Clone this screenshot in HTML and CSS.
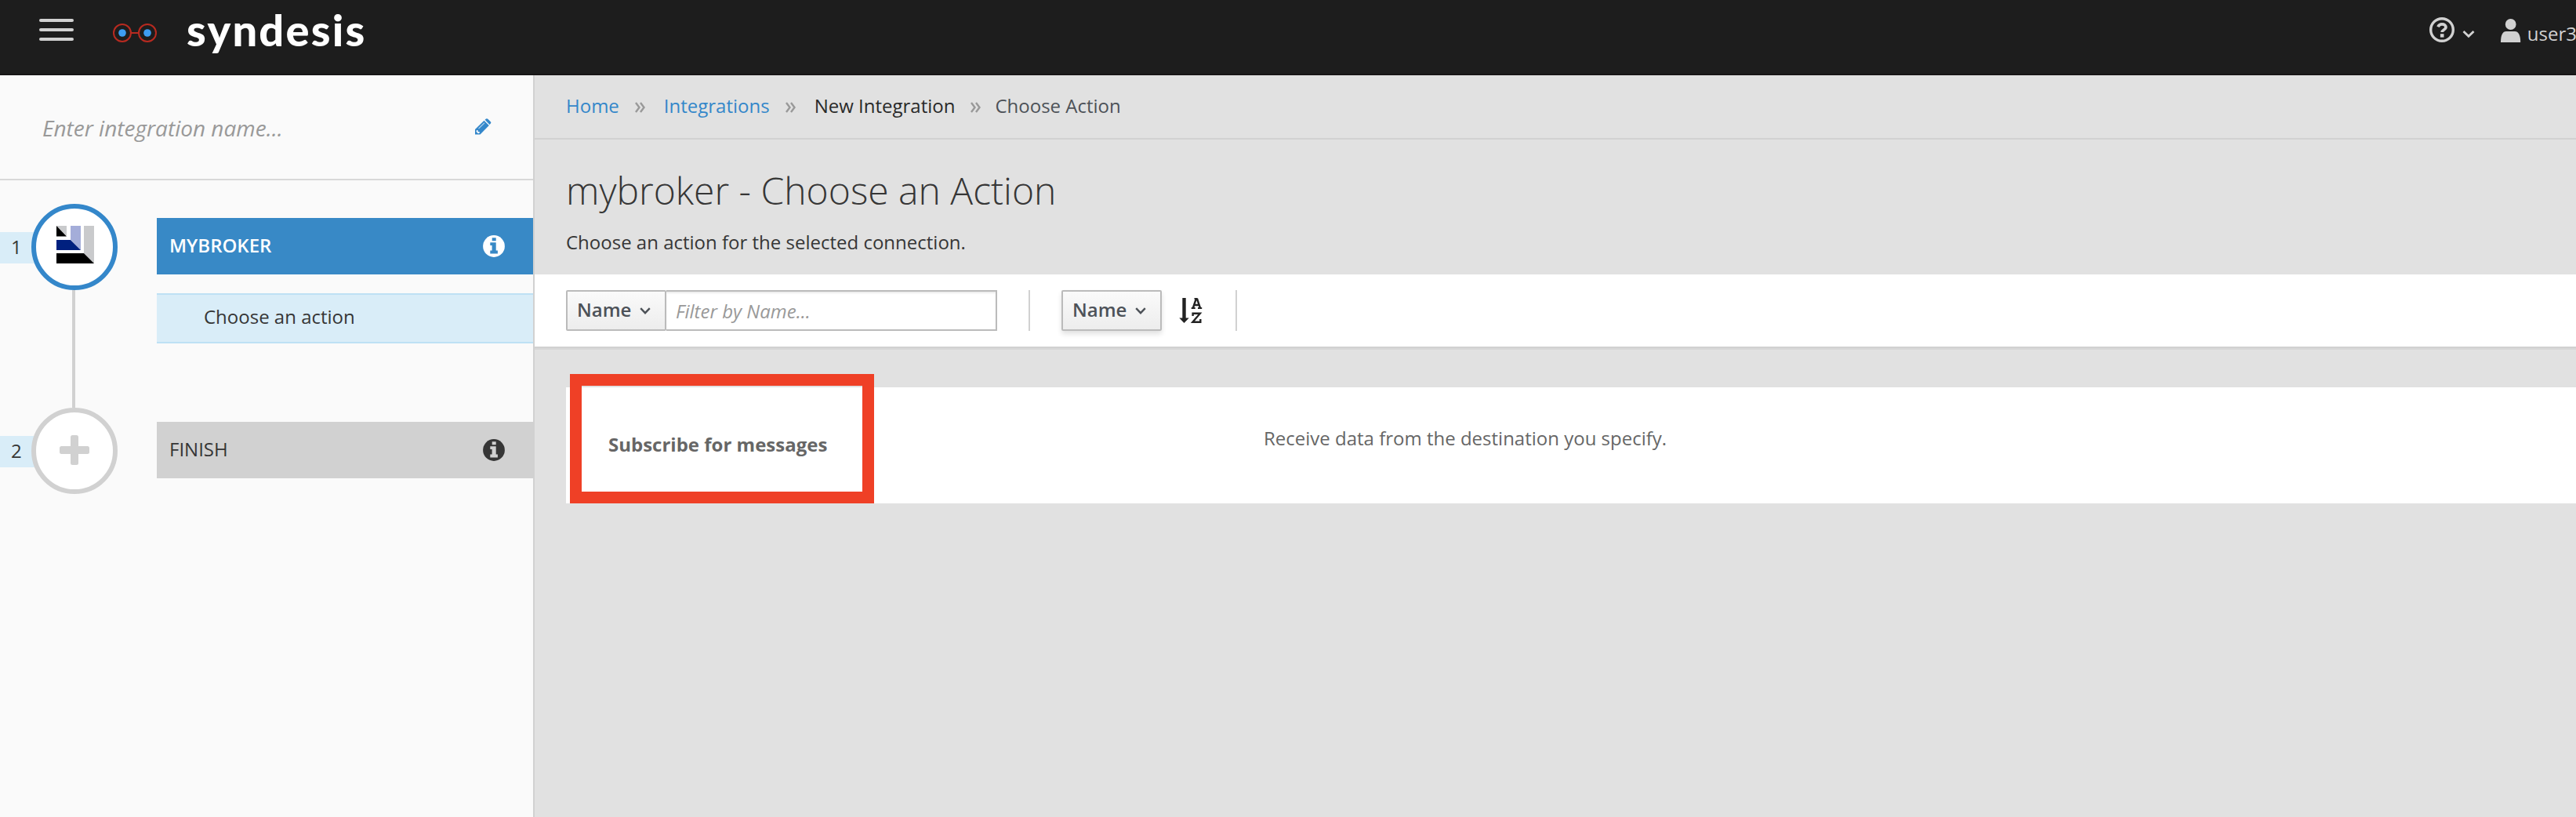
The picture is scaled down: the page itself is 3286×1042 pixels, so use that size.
FILE: index.html
```html
<!DOCTYPE html>
<html lang="en">
<head>
<meta charset="utf-8">
<title>Syndesis</title>
<link rel="stylesheet" href="styles.css">
</head>
<body>
<header class="navbar">
  <button class="menu" aria-label="Menu"><span></span><span></span><span></span></button>
  <svg class="logo" width="56" height="24" viewBox="0 0 56 24" fill="none" stroke="#b82a20" stroke-width="2">
    <circle cx="12" cy="12" r="11"/><circle cx="44" cy="12" r="11"/><path d="M23 12h10"/>
    <circle cx="12" cy="12" r="4.8" fill="#3d9df2" stroke="none"/><circle cx="44" cy="12" r="4.8" fill="#3d9df2" stroke="none"/>
  </svg>
  <span class="wordmark">syndesis</span>
  <nav class="utility">
    <svg class="help" width="34" height="34" viewBox="0 0 34 34" fill="none" stroke="#d1d1d1">
      <circle cx="17" cy="17" r="14.3" stroke-width="3.4"/>
      <path d="M12 13.2q1.4-3.4 5-3.4c3 0 5 1.6 5 3.9 0 3.4-4.8 3.2-4.8 6.3" stroke-width="3.8"/>
      <path d="M17.2 22.2v4.400" stroke-width="4.6"/>
    </svg>
    <svg class="caret" width="16" height="11" viewBox="0 0 16 11" fill="none" stroke="#d1d1d1" stroke-width="2.8"><path d="M1.5 2l6.500 6.300L14.500 2"/></svg>
    <svg class="person" width="26" height="30" viewBox="0 0 26 30" fill="#d1d1d1"><circle cx="12.700" cy="7" r="6.900"/><path d="M0 30c0-9.500 2.500-14 7-14h11c4.500 0 7.200 4.500 7.200 14z"/></svg>
    <span class="user">user3</span>
  </nav>
</header>
<div class="layout">
  <aside class="sidebar">
    <div class="name-row">
      <span class="name-placeholder">Enter integration name...</span>
      <svg class="pencil" width="22" height="22" viewBox="0 0 22 22" fill="#3487ca"><path d="M1 14L12.500 2.800l6.300 6.200L7.500 20.500H1z"/><path d="M13.600 1.800L15 .5q1.200-.8 2.300.2l3.500 3.500q1 1.200 0 2.400l-1.200 1.300z"/><path d="M5.500 13L13 5.700" stroke="#a9cdea" stroke-width="1.200"/><path d="M2.800 15.200l1.800-.2v2h2.200l-.3 1.700-1.500.6-2.400-2.400z" fill="#fff"/></svg>
    </div>
    <div class="flow">
      <section class="step">
        <div class="step-mark">
          <span class="step-number">1</span>
          <div class="node node-active">
            <svg width="48" height="48" viewBox="0 0 48 48">
              <path d="M0 0h13v13z" fill="#c9cacc"/><path d="M0 0l13 13.500H0z" fill="#000"/>
              <path d="M18 0h13v31L18 17.500z" fill="#a4add9"/><path d="M0 18h18l13 13H0z" fill="#00207f"/>
              <path d="M35 0h13v48L35 34.500z" fill="#c9cacc"/><path d="M0 35h35l13 13H0z" fill="#000"/>
            </svg>
          </div>
          <span class="connector"></span>
        </div>
        <div class="step-body">
          <div class="step-title step-title-active"><span>MYBROKER</span>
            <svg class="info" width="28" height="28" viewBox="0 0 28 28"><circle cx="14" cy="14" r="13.900"/><path class="cut" d="M11.700 3.300h5v4h-5zM9.300 9.300h7.400v10.300h2.200v3.800H9.300v-3.800h2.300v-6.500H9.300z"/></svg>
          </div>
          <div class="substep">Choose an action</div>
        </div>
      </section>
      <section class="step">
        <div class="step-mark">
          <span class="step-number">2</span>
          <div class="node"><svg width="38" height="38" viewBox="0 0 38 38" fill="#d1d1d1"><rect x="14" width="10" height="38" rx="2.500"/><rect y="14" width="38" height="10" rx="2.500"/></svg></div>
        </div>
        <div class="step-body">
          <div class="step-title"><span>FINISH</span>
            <svg class="info" width="28" height="28" viewBox="0 0 28 28"><circle cx="14" cy="14" r="13.900"/><path class="cut" d="M11.700 3.300h5v4h-5zM9.300 9.300h7.400v10.300h2.200v3.800H9.300v-3.800h2.300v-6.500H9.300z"/></svg>
          </div>
        </div>
      </section>
    </div>
  </aside>
  <main class="content">
    <nav class="breadcrumb">
      <a class="crumb-home">Home</a><svg class="sep" width="13" height="14" viewBox="0 0 13 14"><path d="M1 1l4.500 6L1 13M7 1l4.500 6L7 13"/></svg>
      <a class="crumb-list">Integrations</a><svg class="sep" width="13" height="14" viewBox="0 0 13 14"><path d="M1 1l4.500 6L1 13M7 1l4.500 6L7 13"/></svg>
      <span class="crumb-new">New Integration</span><svg class="sep" width="13" height="14" viewBox="0 0 13 14"><path d="M1 1l4.500 6L1 13M7 1l4.500 6L7 13"/></svg>
      <span class="crumb-current">Choose Action</span>
    </nav>
    <div class="heading">
      <h1>mybroker - Choose an Action</h1>
      <p>Choose an action for the selected connection.</p>
    </div>
    <div class="toolbar">
      <div class="filter">
        <button class="btn btn-addon">Name<svg class="chev" width="14" height="9" viewBox="0 0 14 9"><path d="M1.200 1.200L7 7.200l5.800-6"/></svg></button>
        <div class="field">Filter by Name...</div>
      </div>
      <div class="sort">
        <button class="btn btn-sort">Name<svg class="chev" width="14" height="9" viewBox="0 0 14 9"><path d="M1.200 1.200L7 7.200l5.800-6"/></svg></button>
        <svg class="az" width="30" height="34" viewBox="0 0 30 34" fill="none" stroke="#222">
          <path d="M6.500 1v26" stroke-width="4.400"/><path d="M.3 26.500h12.400l-6.200 6.500z" fill="#222" stroke="none"/>
          <path d="M17.800 14L21.800 2M23 2l4 12M19 10h7" stroke-width="2.400"/><path d="M15.700 14h5M24 14h5.200M19.500 1.900h4.200" stroke-width="1.800"/>
          <path d="M17.600 24v-3.200h9.200L17.400 31.800h9.900V28" stroke-width="2.400"/>
        </svg>
      </div>
    </div>
    <div class="list">
      <article class="row">
        <strong class="action-name">Subscribe for messages</strong>
        <span class="action-text">Receive data from the destination you specify.</span>
        <span class="highlight"></span>
      </article>
    </div>
  </main>
</div>
</body>
</html>
```
FILE: styles.css
```css
* { box-sizing: border-box; }
body {
  margin: 0;
  height: 1042px;
  overflow: hidden;
  font: 24px/40px "Open Sans", "Noto Sans", sans-serif;
  color: #363636;
  background: #e1e1e1;
}
svg { display: block; flex: none; }
button { font: inherit; margin: 0; }
.navbar {
  display: flex;
  align-items: flex-start;
  height: 96px;
  background: #1d1d1d;
  border-bottom: 2px solid #171516;
  white-space: nowrap;
}
.menu {
  display: flex;
  flex-direction: column;
  gap: 8px;
  margin: 24px 50px 0;
  padding: 0;
  border: 0;
  background: none;
}
.menu span { width: 44px; height: 4px; border-radius: 2px; background: #d1d1d1; }
.logo { margin: 30px 38px 0 0; }
.wordmark {
  margin-top: 8px;
  font: 900 56px/60px Lato, sans-serif;
  letter-spacing: 2.2px;
  color: #fff;
}
.utility { display: flex; align-items: flex-start; margin-left: auto; color: #d1d1d1; }
.help { margin-top: 21px; }
.caret { margin: 38px 33px 0 9px; }
.person { margin-top: 24px; }
.user { margin: 23px -1px 0 8px; }

.layout { display: flex; height: 946px; }
.sidebar { width: 682px; flex: none; background: #fafafa; border-right: 2px solid #d1d1d1; }
.name-row {
  display: flex;
  align-items: center;
  justify-content: space-between;
  height: 134px;
  padding: 2px 53px 0 54px;
  border-bottom: 2px solid #d8d8d8;
  font-size: 28px;
  font-style: italic;
  color: #999;
}
.pencil { margin-bottom: 2px; }
.flow { padding-top: 30px; }
.step { display: flex; height: 260px; }
.step-mark { position: relative; width: 200px; flex: none; padding: 36px 0 0; }
.step-number {
  display: block;
  width: 60px;
  height: 40px;
  padding-left: 14px;
  line-height: 37px;
  background: #d9edf8;
}
.node {
  position: absolute;
  left: 40px;
  top: 0;
  display: flex;
  align-items: center;
  justify-content: center;
  width: 110px;
  height: 110px;
  padding-bottom: 2px;
  border: 6px solid #d1d1d1;
  border-radius: 50%;
  background: #fff;
}
.node-active { border-color: #3487ca; padding: 0 0 6px 2px; }
.connector { position: absolute; left: 92px; top: 110px; width: 4px; height: 150px; background: #d1d1d1; }
.step-body { flex: 1; padding-top: 18px; }
.step-title {
  display: flex;
  align-items: center;
  justify-content: space-between;
  height: 72px;
  padding: 0 36px 2px 16px;
  background: #d1d1d1;
}
.step-title-active { background: #3889c6; color: #fff; font-weight: 600; }
.info { fill: #363636; margin-top: 2px; }
.info .cut { fill: #d1d1d1; }
.step-title-active .info { fill: #fff; }
.step-title-active .cut { fill: #3889c6; }
.substep {
  height: 64px;
  margin-top: 24px;
  padding: 8px 0 0 60px;
  border: solid #bee1f4;
  border-width: 2px 0;
  background: #d9edf8;
}

.content { flex: 1; min-width: 0; }
.breadcrumb {
  display: flex;
  align-items: flex-start;
  height: 82px;
  padding: 19px 40px 0;
  border-bottom: 2px solid #d1d1d1;
}
.breadcrumb a { color: #3487ca; }
.sep { margin: 15px 0 0; fill: none; stroke: #999; stroke-width: 2.400; }
.crumb-home, .crumb-list { margin-right: 20px; }
.crumb-list, .crumb-new { margin-left: 24px; }
.crumb-new { margin-right: 20px; color: #292929; }
.crumb-current { margin-left: 18px; color: #4d5258; }
.heading { height: 172px; padding: 33px 40px 0; }
h1 { margin: 0; font-size: 48px; font-weight: 300; line-height: 64px; }
.heading p { margin: 14px 0 0; }
.toolbar {
  display: flex;
  height: 94px;
  padding: 20px 40px;
  background: #fff;
  border-bottom: 2px solid #d1d1d1;
  box-shadow: 0 2px 0 rgba(3, 3, 3, .045);
}
.filter { display: flex; width: 592px; margin-right: 40px; border-right: 2px solid #d1d1d1; }
.btn {
  display: flex;
  align-items: center;
  gap: 11px;
  height: 52px;
  padding: 0 17px 2px 12px;
  border: 2px solid #bbb;
  border-radius: 2px;
  background: linear-gradient(#fafafa, #ededed);
  font-weight: 600;
  line-height: 40px;
  color: #4d5258;
}
.chev { fill: none; stroke: #4d5258; stroke-width: 2.400; margin-top: 2px; }
.btn-addon { width: 128px; }
.field {
  width: 422px;
  height: 52px;
  padding: 5px 12px;
  border: 2px solid #bbb;
  border-left: 0;
  box-shadow: inset 0 2px 2px rgba(3, 3, 3, .075);
  font-style: italic;
  color: #999;
}
.sort { display: flex; width: 224px; border-right: 2px solid #d1d1d1; }
.btn-sort { width: 128px; box-shadow: 0 4px 6px rgba(3, 3, 3, .12); }
.az { margin: 9px 0 0 22px; }
.list { padding: 50px 0 0 40px; }
.row {
  position: relative;
  display: flex;
  height: 148px;
  background: #fff;
  color: #666;
}
.action-name { width: 890px; padding: 53px 0 0 54px; font-weight: 700; }
.action-text { padding-top: 45px; }
.highlight { position: absolute; left: 5px; top: -17px; width: 388px; height: 165px; border: 15px solid #ef4026; }
```
